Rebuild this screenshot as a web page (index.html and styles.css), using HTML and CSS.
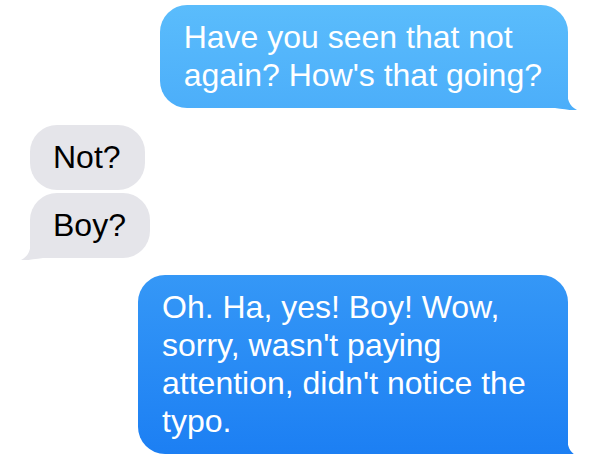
FILE: index.html
```html
<!DOCTYPE html>
<html lang="en">
  <head>
    <meta charset="UTF-8" />
    <meta name="viewport" content="width=device-width, initial-scale=1.0" />
    <title>Messages</title>
    <link rel="stylesheet" href="styles.css">
  </head>
  <body>
    <div class="thread">
      <div class="bubble sent tail">Have you seen that not<br>again? How's that going?</div>
      <div class="bubble received">Not?</div>
      <div class="bubble received tail follow">Boy?</div>
      <div class="bubble sent tail">Oh. Ha, yes! Boy! Wow, sorry, wasn't paying attention, didn't notice the typo.</div>
    </div>
  </body>
</html>
```

FILE: styles.css
```css
body {
  margin: 0;
  background: #fff;
  font-family: "Liberation Sans", Arial, sans-serif;
}
.thread {
  display: flex;
  flex-direction: column;
  padding-top: 5px;
}
.bubble {
  position: relative;
  max-width: 430px;
  box-sizing: border-box;
  padding: 13px 26px 14px 24px;
  border-radius: 27px;
  font-size: 32px;
  line-height: 38px;
}
.bubble + .bubble {
  margin-top: 17px;
}
.bubble.follow {
  margin-top: 3px;
}
.sent {
  align-self: flex-end;
  margin-right: 31px;
  color: #fff;
  background: linear-gradient(#5bbdfc, #1b7ef3) fixed;
}
.received {
  align-self: flex-start;
  margin-left: 30px;
  padding: 13px 24px 14px 23px;
  color: #000;
  background: #e5e5ea;
}
.sent.tail {
  border-bottom-right-radius: 0;
}
.received.tail {
  border-bottom-left-radius: 0;
}
.tail::after {
  content: "";
  position: absolute;
  bottom: -3px;
  width: 26px;
  height: 24px;
}
.sent.tail::after {
  right: -11px;
  background: linear-gradient(#5bbdfc, #1b7ef3) fixed;
  clip-path: path("M14,2 C14,12 16,19 24,23 C17,23.5 10,22 2,21 L14,21 Z");
}
.received.tail::after {
  left: -11px;
  background: #e5e5ea;
  clip-path: path("M12,2 C12,12 10,19 2,23 C9,23.5 16,22 24,21 L12,21 Z");
}
```
